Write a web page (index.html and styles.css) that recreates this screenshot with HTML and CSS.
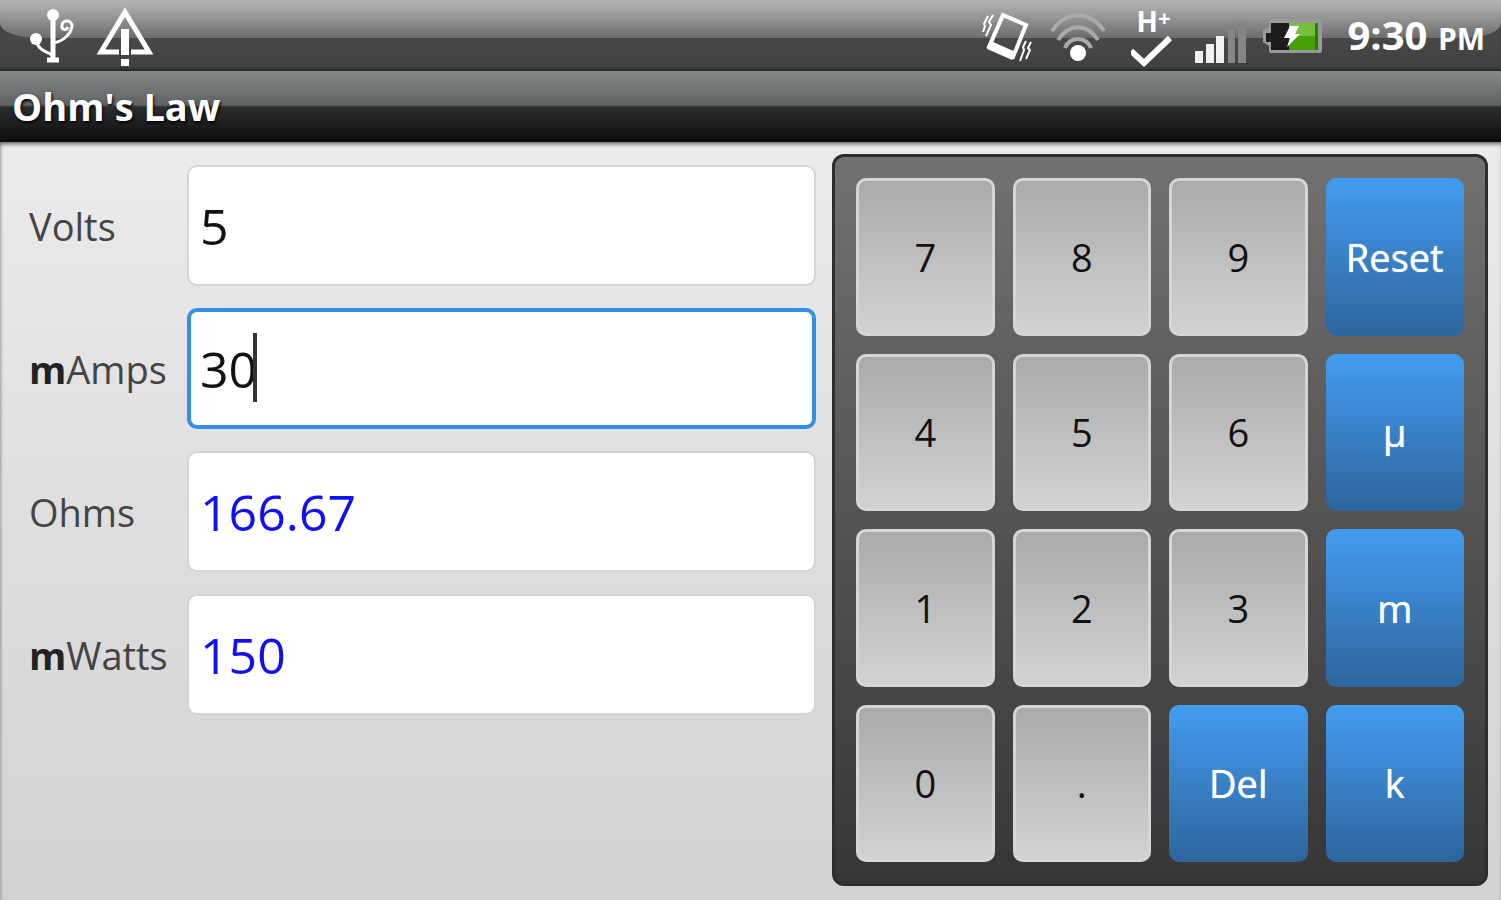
FILE: index.html
```html
<!DOCTYPE html>
<html lang="en">

<head>
  <meta charset="UTF-8" />
  <meta name="viewport" content="width=device-width, initial-scale=1.0" />
  <title>Ohm's Law</title>
  <link rel="stylesheet" href="styles.css">
</head>

<body>
  <header class="status-bar">
    <div class="status-group">
      <!-- usb -->
      <svg class="icon" width="46" height="56" viewBox="0 0 46 56" fill="none" stroke="#fff" stroke-width="4">
        <path d="M25 8V53" stroke-width="5" />
        <path d="M8 32C9 41 15 44 25 48M25 36C36 34 43 27 44 19C44 13 35 12 34 18C33 23 38 24 40 20" stroke-width="3" />
        <circle cx="25" cy="8" r="6" fill="#fff" stroke="none" />
        <circle cx="8" cy="32" r="6" fill="#fff" stroke="none" />
        <path d="M19 53H31" stroke-width="5" />
      </svg>
      <!-- debugging warning -->
      <svg class="icon" width="62" height="62" viewBox="0 0 62 62">
        <path d="M25 48H7L31 8L55 48H37" fill="none" stroke="#fff" stroke-width="5" />
        <path d="M27 25H35V51H27ZM27 55H35V62H27Z" fill="#fff" />
      </svg>
    </div>
    <div class="status-group status-right">
      <!-- vibrate -->
      <svg class="icon" width="56" height="56" viewBox="0 0 56 56" fill="none" stroke="#fff">
        <path d="M22 8L45 18L32 50L8 40Z" stroke-width="4" />
        <path d="M8 38L33 49" stroke-width="9" />
        <path d="M12 8L8 15L10 18L5 29M7 9L3 17L4 19L2 25M50 35L47 41L49 43L45 52M45 34L42 40L43 43L39 54" stroke-width="2" />
      </svg>
      <!-- wifi -->
      <svg class="icon" width="60" height="56" viewBox="0 0 60 56" fill="none" stroke="#aaa" stroke-width="4">
        <path d="M1 24C15 3 39 3 53 24M7 33C18 16 36 16 47 33M14 41C19 29 35 29 40 41" />
        <circle cx="27" cy="46" r="8" fill="#fff" stroke="none" />
      </svg>
      <div class="network">
        <span class="network-type">H<sup>+</sup></span>
        <svg class="icon" width="44" height="34" viewBox="0 0 44 34" fill="none" stroke="#fff" stroke-width="6">
          <path d="M0 16L13 28L39 3" />
        </svg>
      </div>
      <!-- signal -->
      <svg class="icon" width="54" height="60" viewBox="0 0 54 60">
        <path d="M0 46H8V58H0ZM11 39H19V58H11ZM21 31H29V58H21Z" fill="#f0f0f0" />
        <path d="M33 24H40V58H33ZM43 17H51V58H43Z" fill="#858585" />
      </svg>
      <!-- battery -->
      <svg class="icon" width="64" height="44" viewBox="0 0 64 44">
        <path d="M8 6H57Q59 6 59 8V38Q59 40 57 40H8Q6 40 6 38V33L0 29V17L6 14V8Q6 6 8 6Z" fill="#999" />
        <path d="M8 10H55V37H8V29H3V20H8Z" fill="#1c1c1c" />
        <path d="M26 10H55V37H26Z" fill="#469f06" />
        <path d="M26 10H55V23H26Z" fill="#76bd3e" />
        <path d="M52 10H55V37H52Z" fill="#2d7a05" />
        <path d="M27 13H36L32 21H37L24 34L27 25H21Z" fill="#fff" />
      </svg>
      <div class="clock">9:30 <small>PM</small></div>
    </div>
  </header>

  <h1 class="title">Ohm's Law</h1>

  <main class="content">
    <form class="fields">
      <label for="volts">Volts</label>
      <div class="field"><input id="volts" type="text" value="5"></div>

      <label for="amps"><b>m</b>Amps</label>
      <div class="field">
        <input id="amps" class="active" type="text" value="30">
        <span class="caret"></span>
      </div>

      <label for="ohms">Ohms</label>
      <div class="field"><input id="ohms" class="result" type="text" value="166.67"></div>

      <label for="watts"><b>m</b>Watts</label>
      <div class="field"><input id="watts" class="result" type="text" value="150"></div>
    </form>

    <div class="keypad">
      <button class="key">7</button>
      <button class="key">8</button>
      <button class="key">9</button>
      <button class="key blue">Reset</button>
      <button class="key">4</button>
      <button class="key">5</button>
      <button class="key">6</button>
      <button class="key blue">µ</button>
      <button class="key">1</button>
      <button class="key">2</button>
      <button class="key">3</button>
      <button class="key blue">m</button>
      <button class="key">0</button>
      <button class="key">.</button>
      <button class="key blue">Del</button>
      <button class="key blue">k</button>
    </div>
  </main>
</body>

</html>
```

FILE: styles.css
```css
* {
  box-sizing: border-box;
}

body {
  margin: 0;
  min-height: 100vh;
  display: flex;
  flex-direction: column;
  font-family: "Open Sans", "Noto Sans", sans-serif;
  font-size: 38px;
  color: #444;
}

.status-bar {
  position: relative;
  height: 71px;
  padding: 0 16px 2px 28px;
  display: flex;
  justify-content: space-between;
  background: linear-gradient(#3e3e3e 0, #484848 39px, #404040 67px, #2a2a2a 70px);
  color: #fff;
}

/* glossy top half */
.status-bar::before {
  content: "";
  position: absolute;
  top: 0;
  left: 0;
  right: 0;
  height: 38px;
  border-radius: 0 0 36px 36px / 0 0 15px 15px;
  background: linear-gradient(#b4b4b4, #a0a0a0 12px, #6c6c6c);
}

.status-group {
  position: relative;
  display: flex;
  align-items: center;
  gap: 20px;
}

.status-right {
  gap: 14px;
}

.icon {
  display: block;
}

.network {
  display: flex;
  flex-direction: column;
  align-items: center;
  margin: 0 6px;
}

.network-type {
  font-size: 28px;
  line-height: 40px;
  font-weight: bold;
}

.network-type sup {
  font-size: 22px;
  line-height: 0;
  vertical-align: 6px;
}

.network .icon {
  margin-top: -6px;
}

.clock {
  margin-left: 6px;
  font-size: 40px;
  font-weight: bold;
}

.clock small {
  font-size: 30px;
}

.title {
  margin: 0;
  height: 71px;
  padding: 0 12px;
  line-height: 70px;
  font-size: 38px;
  color: #fff;
  text-shadow: 1px 2px 3px #000;
  background: linear-gradient(#858889 0, #5f6364 34px, #2c2d2e 36px, #0d0e0f 70px);
}

.content {
  flex: 1;
  display: grid;
  grid-template-columns: 6fr 5fr;
  gap: 16px;
  padding: 12px 13px 14px 29px;
  background: linear-gradient(#ebebeb, #d2d2d2);
  box-shadow: inset 0 4px 4px -2px #666, inset 3px 0 3px -2px #aaa;
}

.fields {
  display: grid;
  grid-template-columns: 158px 1fr;
  align-content: start;
  align-items: center;
  row-gap: 22px;
  padding-top: 11px;
}

.fields b {
  color: #222;
}

.field {
  position: relative;
}

.field input {
  display: block;
  width: 100%;
  height: 121px;
  padding: 0 11px;
  border: 2px solid #d4d4d4;
  border-radius: 10px;
  background: #fff;
  font-family: inherit;
  font-size: 50px;
  color: #111;
  outline: none;
}

.field .active {
  border: 4px solid #3490e6;
  padding: 0 9px;
}

.field .result {
  color: #1010f0;
}

.caret {
  position: absolute;
  left: 66px;
  top: 25px;
  width: 4px;
  height: 69px;
  background: #333;
}

.keypad {
  display: grid;
  grid-template-columns: repeat(4, 1fr);
  grid-template-rows: repeat(4, 1fr);
  gap: 18px;
  padding: 21px;
  border: 3px solid #2e2e2e;
  border-radius: 12px;
  background: linear-gradient(#73716f, #363636);
}

.key {
  padding: 0;
  border: 3px solid #d6d6d6;
  border-radius: 10px;
  background: linear-gradient(#aaa, #d2d2d2);
  font-family: inherit;
  font-size: 38px;
  color: #111;
}

.key.blue {
  border: none;
  background: linear-gradient(#439cf0, #2d659c);
  color: #fff;
  text-shadow: 0 0 1px #fff;
}
```
